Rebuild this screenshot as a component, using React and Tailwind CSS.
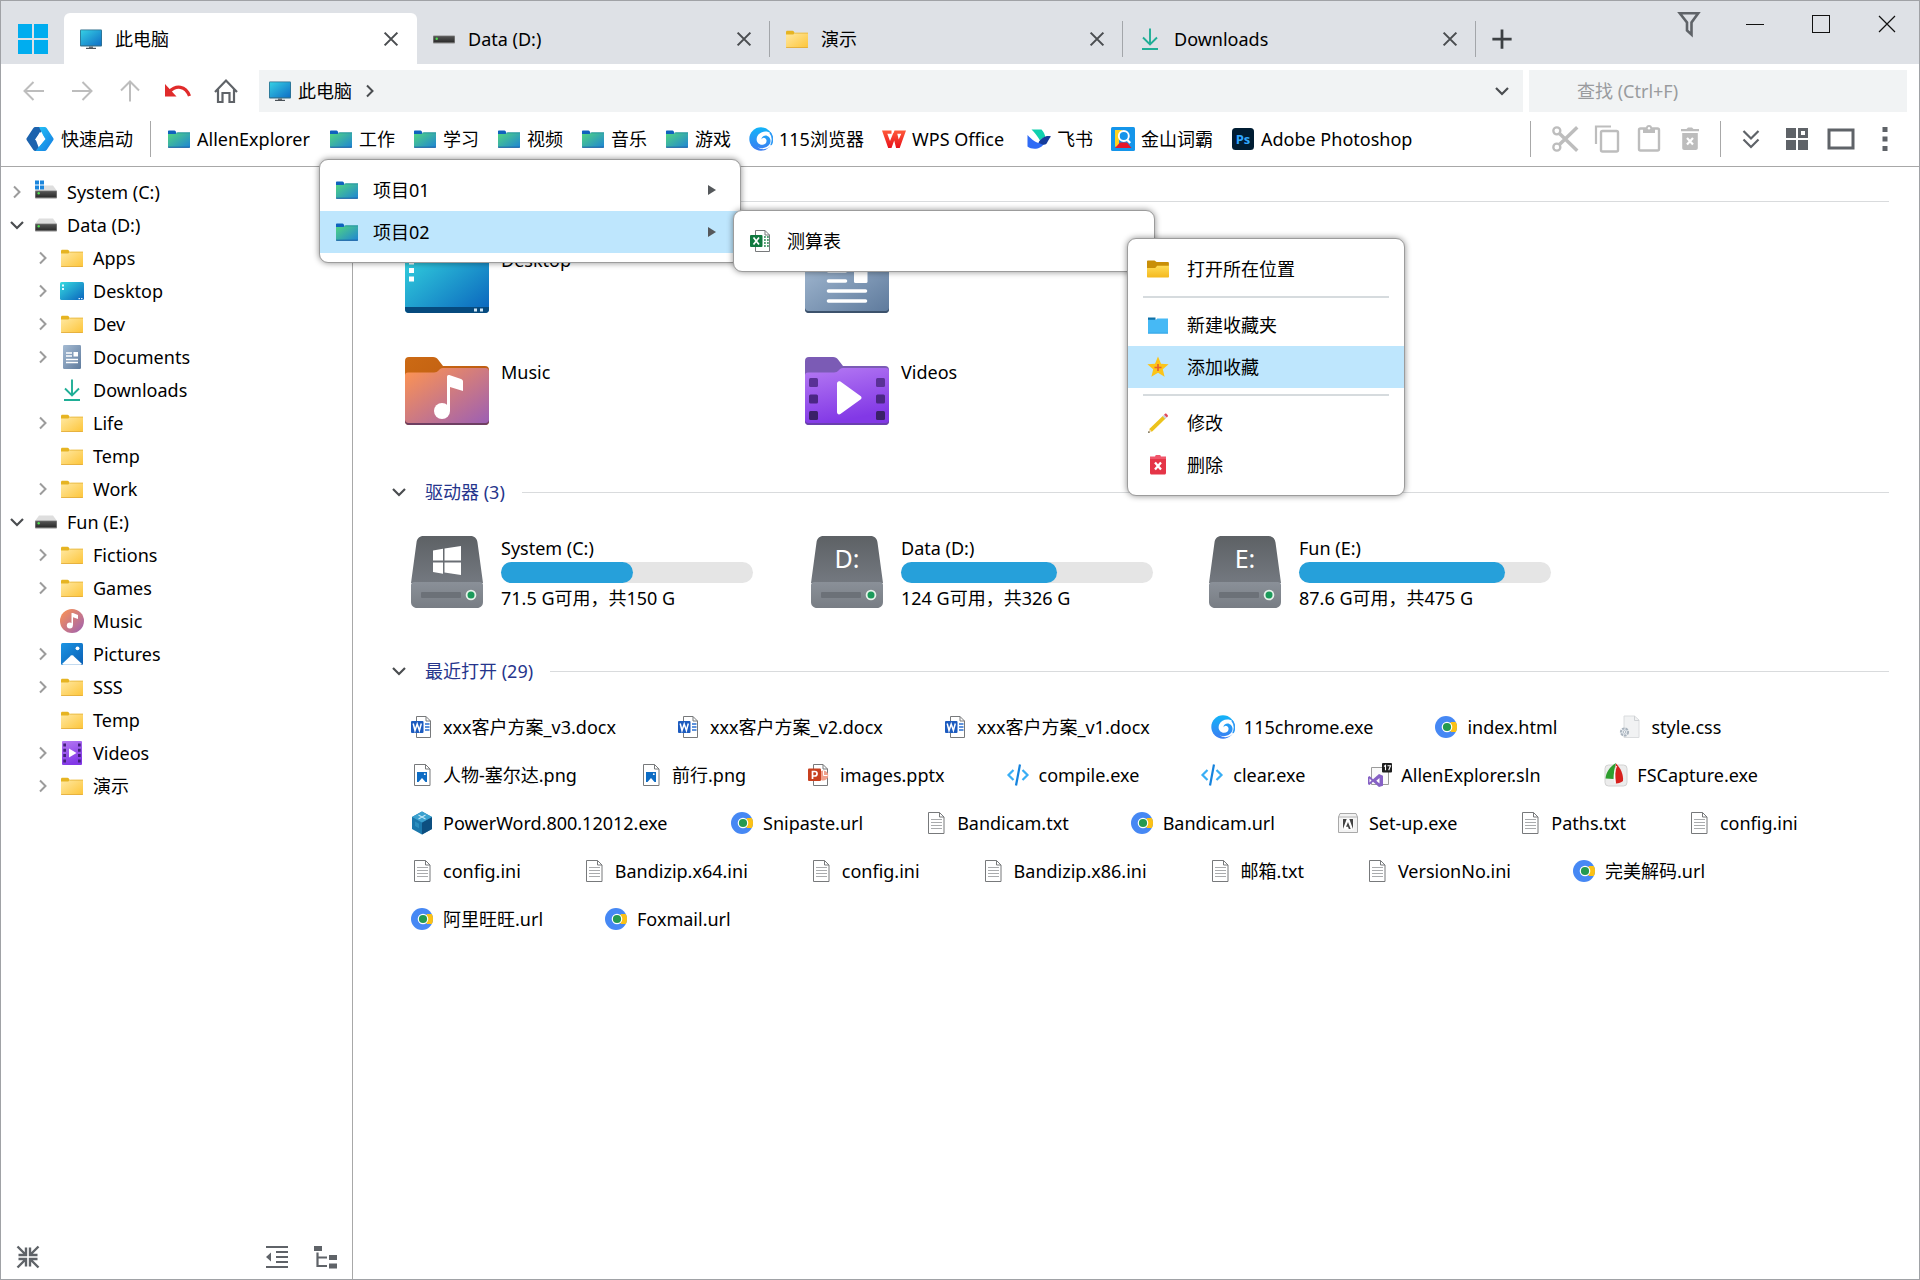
import React from "react";

/* ---------- small icons (drawn on a 24px grid) ---------- */

function Svg({ size = 24, box = "0 0 24 24", h, children }) {
  return (
    <svg width={size} height={h || size} viewBox={box} className="block shrink-0" fill="none" aria-hidden="true">
      {children}
    </svg>
  );
}

function Defs() {
  const g = (id, a, b, x2 = 1, y2 = 1) => (
    <linearGradient id={id} x1="0" y1="0" x2={x2} y2={y2}>
      <stop offset="0" stopColor={a} />
      <stop offset="1" stopColor={b} />
    </linearGradient>
  );
  return (
    <svg width="0" height="0" className="absolute" aria-hidden="true">
      <defs>
        {g("gYellow", "#ffe9a4", "#fdc539")}
        {g("gTeal", "#52d77f", "#1f84d4")}
        {g("gScreen", "#35cfe4", "#0f6fc6")}
        {g("gDesk", "#36dbe0", "#0a63bd")}
        {g("gDoc", "#a5bbd3", "#5f7b9d")}
        {g("gMusic", "#ff9550", "#9c5fb4")}
        {g("gMusicTab", "#cc6a14", "#b4540f")}
        {g("gVideo", "#b57af3", "#8238e6", 0.3, 1)}
        {g("gPic", "#1b95e4", "#0b5fb4")}
        {g("gDriveTop", "#5d6165", "#747980", 0, 1)}
        {g("gDriveLow", "#8a9098", "#787d84", 0, 1)}
        {g("gSwirl", "#12b4f8", "#3d7df2", 0, 1)}
        {g("gQuick", "#25c6f8", "#1479e0")}
        {g("gWps", "#ff5a3a", "#e8101a", 0, 1)}
        {g("gBar", "#555", "#2b2b2b", 0, 1)}
        {g("gOpen", "#ffdc55", "#f4b81e", 0, 1)}
      </defs>
    </svg>
  );
}

const FolderIcon = () => (
  <Svg>
    <path d="M1 5.2c0-.8.5-1.4 1.3-1.4h5.2c.6 0 1 .2 1.3.7l1 1.5v2.5H1z" fill="#e6b422" />
    <path d="M1 7.5h7.3l2-1.7H23V20a.8.8 0 0 1-.8.8H1.8A.8.8 0 0 1 1 20z" fill="url(#gYellow)" />
    <path d="M1 20.2h22v.2c0 .4-.4.7-.8.7H1.8c-.4 0-.8-.3-.8-.7z" fill="#e0a52c" />
    <path d="M10.300 5.800H23v.8H9.500z" fill="#e3b43a" />
  </Svg>
);

const TealFolderIcon = () => (
  <Svg>
    <path d="M1 4.500c0-.6.4-1 1-1h5.500c.5 0 .8.2 1 .6l1 1.900V8H1z" fill="#0f62bd" />
    <path d="M1 7h7.500l2-1.600H23V20a.6.600 0 0 1-.6.6H1.600A.6.600 0 0 1 1 20z" fill="url(#gTeal)" />
    <path d="M10.500 5.400H23v.9H9.500z" fill="#1a8a9c" />
    <path d="M1 19.700h22v.3c0 .4-.3.700-.6.700H1.600c-.3 0-.6-.3-.6-.7z" fill="#125aa0" />
  </Svg>
);

const BlueFolderIcon = () => (
  <Svg>
    <path d="M2 4.500h7.500v3H2z" fill="#1172a8" />
    <path d="M2 6.800h8l1.200-1.300H22V20.500H2z" fill="#46b9f5" />
    <path d="M2 19.700h20v.8H2z" fill="#2d9fe0" />
  </Svg>
);

const OpenFolderIcon = () => (
  <Svg>
    <path d="M1 4.300c0-.4.4-.8.800-.8H8.500L10.600 5H22c.5 0 .9.4.9.900V13H1z" fill="#c98f08" />
    <path d="M1 11h8.200l2-2.300H23V19.600c0 .6-.4 1-1 1H2c-.6 0-1-.4-1-1z" fill="url(#gOpen)" />
  </Svg>
);

const MonitorIcon = () => (
  <Svg>
    <rect x="1" y="2.500" width="22" height="17" rx="1" fill="#2f6f8c" />
    <rect x="1.800" y="3.300" width="20.400" height="15" fill="url(#gScreen)" />
    <path d="M10 19.500h4v1.400h-4z" fill="#5d6268" />
    <path d="M7 20.800h10V22H7z" fill="#4b5258" />
  </Svg>
);

const DriveIcon = ({ win, flat }) => (
  <Svg>
    {!flat && <path d="M5 5.500h14l4 5.500H1z" fill="#dedede" />}
    <rect x="1" y={flat ? 8.500 : 10.500} width="22" height="8" rx=".8" fill="#8b8b8b" />
    <rect x="1.600" y={flat ? 9.200 : 11.200} width="20.800" height="6.200" fill="url(#gBar)" />
    <circle cx="4.700" cy={flat ? 11.700 : 13.300} r="1.200" fill="#4fe04f" />
    {win && (
      <g>
        <rect x="0" y="0" width="10" height="9.500" fill="#fff" />
        <path d="M1 .5h4v4H1zM6 .5h4v4H6zM1 5.500h4v4H1zM6 5.500h4v4H6z" fill="#1c86dc" />
      </g>
    )}
  </Svg>
);

const DownloadIcon = () => (
  <Svg>
    <path d="M12 1.500V17M5 10.500l7 7 7-7M4 22h16" stroke="#1fae96" strokeWidth="1.900" />
  </Svg>
);

const DesktopIcon = () => (
  <Svg>
    <rect x="0" y="3" width="24" height="18" rx="1.600" fill="url(#gDesk)" />
    <path d="M2 5.500h2v2H2zM2 9h2v2H2z" fill="#e8fbff" />
    <path d="M18.500 19h1.500v1.200h-1.500zM21 19h1.500v1.200H21z" fill="#d5eeff" />
  </Svg>
);

const DocumentsIcon = () => (
  <Svg>
    <rect x="3" y="0" width="18" height="24" rx="1.200" fill="url(#gDoc)" />
    <path d="M6 8h6M6 11h6M6 14.500h12M6 17.500h12" stroke="#fff" strokeWidth="1.300" />
    <rect x="13.500" y="7" width="4.500" height="4.500" fill="#fff" />
  </Svg>
);

const MusicIcon = () => (
  <Svg>
    <circle cx="12" cy="12" r="12" fill="url(#gMusic)" />
    <circle cx="9.800" cy="16.500" r="3" fill="#fff" />
    <path d="M11.500 4h1.500l5 2v4l-5-1.700v8h-1.500z" fill="#fff" />
  </Svg>
);

const PicturesIcon = () => (
  <Svg>
    <rect x="1" y="1" width="22" height="22" rx="1.500" fill="url(#gPic)" />
    <path d="M2 22l9-8.500c.6-.5 1.400-.5 2 0l9 8.500c-.3.600-.8.800-1.500.800h-17c-.7 0-1.200-.2-1.500-.8z" fill="#fff" />
    <circle cx="17.500" cy="6.300" r="1.900" fill="#fff" />
  </Svg>
);

const VideosIcon = () => (
  <Svg>
    <rect x="2" y="0" width="20" height="24" rx="1" fill="url(#gVideo)" />
    <path d="M3.300 2.500h2.700v3H3.300zM3.300 7.800h2.700v3H3.300zM3.300 13.100h2.700v3H3.300zM3.300 18.500h2.700v3H3.300zM18 2.500h2.700v3H18zM18 7.800h2.700v3H18zM18 13.100h2.700v3H18zM18 18.500h2.700v3H18z" fill="#42207c" />
    <path d="M9 7.500l7.500 4.500L9 16.500z" fill="#fff" />
  </Svg>
);

/* ---------- application icons ---------- */

const WinLogo = () => (
  <Svg size={30} box="0 0 30 30">
    <path d="M0 0h14v14H0zM16 0h14v14H16zM0 16h14v14H0zM16 16h14v14H16z" fill="#00adef" />
  </Svg>
);

const QuickIcon = () => (
  <Svg size={28} h={24} box="0 0 28 24">
    <path d="M10 0h9L9.500 12 14 24h-4.500c-1 0-1.800-.4-2.300-1.200L.8 13.200a2 2 0 0 1 0-2.300L7.200 1.200C7.800.4 8.500 0 10 0z" fill="#1c63ae" />
    <path d="M13 0h5.500c1 0 1.800.4 2.300 1.200l6.400 9.700c.5.700.5 1.600 0 2.300l-6.400 9.600c-.5.800-1.300 1.200-2.300 1.200H9.500L19 12z" fill="url(#gQuick)" />
    <path d="M14 5l5.500 7L13 19.500l.5-5.500-4.500-1z" fill="#fff" />
  </Svg>
);

const SwirlIcon = () => (
  <Svg>
    <circle cx="12" cy="12" r="11.700" fill="url(#gSwirl)" />
    <path d="M22 6.500C17.500 3 10.500 4.500 8.300 9.300c-2 4.400.7 8.500 4.700 8.500 3 0 4.900-2.200 4.500-4.500-.3-1.700-1.700-2.600-3.300-2.400-1 .1-1.700.8-1.900 1.500.3-2.700 3.200-4.600 6-3.500 3.200 1.300 4.200 5.100 2.400 8.200-2.400 4-8 5.200-12.200 3.100 4.600 3.400 11.600 2.200 14-2.700 1.600-3.500.8-8.500-.5-11z" fill="#fff" />
    <path d="M21 5.500c2.800 3.700 3.200 8.300 1 12.500" stroke="#2f9af5" strokeWidth="1.600" />
  </Svg>
);

const WpsIcon = () => (
  <Svg>
    <path d="M0 3.500h9.500v3.200H5.300L8 14l3.300-8h3.800l1.600 6.500 2.600-5.800h-8L12.500 3.500H24L17.700 21h-3.600l-1.900-7.500L9.500 21H6.200z" fill="url(#gWps)" />
  </Svg>
);

const FeishuIcon = () => (
  <Svg>
    <path d="M4.500 2.500h10c2 2 3.400 4.800 3.800 7.500-2 .6-3.800 1.800-5.300 3.600C10.500 9.500 8 5.800 4.500 2.500z" fill="#10d0ae" />
    <path d="M.5 8v11.500C5 23 14 23 18 15.500c-6 2.500-12-1.500-17.500-7.500z" fill="#2f6bf5" />
    <path d="M11.500 15.500C14.500 11 19 8 24 9.500c-1.800 2-2.800 4.500-4.300 6.900-2 2-5.200 1.600-8.200-.9z" fill="#153c9c" />
  </Svg>
);

const DictIcon = () => (
  <Svg>
    <rect width="24" height="24" rx="1.500" fill="#1495ea" />
    <path d="M4 3h7.500L8 13v8l-4-1.500z" fill="#ffd21e" />
    <path d="M4 21l5-5.500h7L20.500 21z" fill="#e8162b" />
    <circle cx="12.800" cy="9" r="5" fill="#1495ea" stroke="#fff" strokeWidth="1.900" />
    <path d="M16 12.500l3.200 3.500" stroke="#fff" strokeWidth="2.200" />
  </Svg>
);

const PsIcon = () => (
  <Svg>
    <rect x="1" y="1" width="22" height="22" rx="3.500" fill="#001d33" />
    <text x="12" y="16.500" textAnchor="middle" fontSize="13" fontWeight="700" fontFamily="'Open Sans', sans-serif" fill="#31a8ff">Ps</text>
  </Svg>
);

const Page = ({ children, x = 4 }) => (
  <>
    <path d={x === 4 ? "M4.500 1.500h11l4.500 4.500V22.500H4.500z" : "M6.500 1.500h9.500l4.500 4.500V22.500H6.500z"} fill="#fff" stroke="#77797b" />
    <path d={x === 4 ? "M15.500 1.500V6H20" : "M16 1.500V6h4.500"} stroke="#77797b" />
    {children}
  </>
);

const WordIcon = () => (
  <Svg>
    <Page x={6}><path d="M15 9h4.500M15 12h4.500M15 15h4.500" stroke="#2a6fd0" strokeWidth="1.400" /></Page>
    <rect x="1" y="6" width="12.500" height="12" rx="1" fill="#1c5bbf" />
    <path d="M3.200 8.500l1.800 7 2.200-6.500 2.200 6.500 1.900-7" stroke="#fff" strokeWidth="1.500" />
  </Svg>
);

const PptIcon = () => (
  <Svg>
    <Page x={6}><path d="M14 8a5 5 0 1 1 0 9z" fill="#f0a08c" /><path d="M16.500 7.500v5h4" stroke="#fff" /></Page>
    <rect x="1" y="5.500" width="13" height="12.500" rx="1" fill="#c8401f" />
    <path d="M5.500 16V8.500h2.300a2.200 2.200 0 0 1 0 4.500H5.500" stroke="#fff" strokeWidth="1.700" />
  </Svg>
);

const ExcelIcon = () => (
  <Svg>
    <Page x={6}><path d="M15 8h1.800M18 8h1.800M15 11h1.800M18 11h1.800M15 14h1.800M18 14h1.800M15 17h1.800M18 17h1.800" stroke="#1f8048" strokeWidth="1.600" /></Page>
    <rect x="1" y="6" width="12.500" height="12" rx="1" fill="#10793f" />
    <path d="M4.500 8.500l5.500 7M10 8.500l-5.500 7" stroke="#fff" strokeWidth="1.700" />
  </Svg>
);

const PngIcon = () => (
  <Svg>
    <Page>
      <rect x="7" y="9" width="10" height="10" fill="#0d6cc4" />
      <path d="M8.500 19l3.500-4 3.500 4z" fill="#fff" />
      <circle cx="14.800" cy="11.200" r=".9" fill="#fff" />
    </Page>
  </Svg>
);

const TextIcon = () => (
  <Svg>
    <Page><path d="M7 8.500h11M7 11.500h11M7 14.500h11M7 17.500h11" stroke="#a9abad" /></Page>
  </Svg>
);

const CodeIcon = () => (
  <Svg>
    <path d="M7.500 7l-5 5 5 5M16.500 7l5 5-5 5" stroke="#38aef5" strokeWidth="2.200" />
    <path d="M14 1.500L10 22.500" stroke="#1583dd" strokeWidth="2.200" />
  </Svg>
);

const ChromiumIcon = () => (
  <Svg>
    <circle cx="12" cy="12" r="11" fill="#4688f4" />
    <path d="M15 9.500l2-2.500h4.800a11 11 0 0 1 0 10H17l-2-2.500z" fill="#fbc116" />
    <circle cx="13" cy="12" r="5.300" fill="#fff" />
    <circle cx="13" cy="12" r="4.100" fill="#249a50" />
  </Svg>
);

const CssIcon = () => (
  <Svg>
    <path d="M6 1h10.500L21 5v17.500H6z" fill="#f1f2f3" stroke="#dadcde" />
    <path d="M16.500 1v4.500H21" stroke="#cfd2d5" />
    <circle cx="6.500" cy="17" r="3.600" fill="#e8edf2" stroke="#aab4be" strokeWidth="2" strokeDasharray="2.600 .9" />
    <circle cx="6.500" cy="17" r="1.300" fill="#fff" stroke="#a0abb5" strokeWidth=".8" />
  </Svg>
);

const SlnIcon = () => (
  <Svg>
    <path d="M3.500 4.500h17v17h-17z" fill="#fafafa" stroke="#9b9b9b" />
    <rect x="14" y="0" width="10" height="9.500" rx="1" fill="#1e1e1e" />
    <path d="M16 3.500l1.500-1.200v5M19.500 2.700h3l-1.800 4.600" stroke="#fff" strokeWidth="1.100" />
    <path d="M0 14l1.500-1 3.500 3.200L11 11l4 1.800v10L11 24l-6-5.200L1.500 22 0 21.200z" fill="#8661c5" />
    <path d="M1.500 15.500v4l2-2zM11.500 15v5.500l-3.200-2.800z" fill="#fff" />
  </Svg>
);

const CaptureIcon = () => (
  <Svg>
    <rect x="1" y="2" width="22" height="21" rx="3.500" fill="#ececec" stroke="#d2d2d2" />
    <path d="M12 0C5.500 4 2 9.500 1.500 15.500l8 .5C9.500 11 10.500 5.500 12 0z" fill="#2f9e2f" />
    <path d="M12 .5c-1.200 6-.8 13.500 0 20 3-.3 5-1 7-2.500C19.500 11.500 17 5.500 12 .5z" fill="#d7201d" />
    <path d="M12.500 3c-2 5-2.500 10-1.500 17" stroke="#fff" />
  </Svg>
);

const CubeIcon = () => (
  <Svg>
    <path d="M12 .5l10 5.500v12l-10 5.500L2 18V6z" fill="#1b78ac" />
    <path d="M12 11.500l10-5.500v12l-10 5.500z" fill="#0d4f80" />
    <path d="M12 .5l10 5.500-10 5.500L2 6z" fill="#3ba1cf" />
    <path d="M8.500 4l7 4M15.500 4l-7 4" stroke="#bfe6f7" strokeWidth="1.100" />
    <path d="M5 10.500l4 2.200v4.500l-4-2.200z" fill="#2c8fbf" />
  </Svg>
);

const SetupIcon = () => (
  <Svg>
    <path d="M4 2.500h16l1.500 3.500v15.500h-19V6z" fill="#f3f3f3" stroke="#a9a9a9" />
    <path d="M2.500 6h19" stroke="#b5b5b5" />
    <rect x="6.500" y="7.500" width="11" height="11" fill="#fff" />
    <path d="M7 18V8h3.700zM17 18V8h-3.700zM12 11l2.700 7h-1.900l-.8-2.300H10z" fill="#444" />
  </Svg>
);

const StarIcon = () => (
  <Svg>
    <path d="M12 1.500l3 7.200 7.600.6-5.800 5 1.800 7.500L12 17.800l-6.600 4 1.800-7.500-5.800-5 7.600-.6z" fill="#fcc419" />
    <path d="M12 9v7M8.500 12.500h7" stroke="#e8622c" strokeWidth="1.700" />
  </Svg>
);

const PencilIcon = () => (
  <Svg>
    <path d="M2.300 21.700l1.500-4.200L17 4.800l2.600 2.600L6.500 20.300z" fill="#ecc31c" />
    <path d="M2.300 21.700l1.200-3.500 2.200 2.200z" fill="#f6dfc0" />
    <path d="M2 22l.8-2 1.200 1.200z" fill="#444" />
    <path d="M16.500 5.200l1.400-1.400 2.700 2.700-1.400 1.400z" fill="#c9d3dc" />
    <path d="M18 3.700l.8-.8c.6-.6 1.300-.6 1.800 0l1 1c.5.5.5 1.200 0 1.800l-.8.800z" fill="#e24a5c" />
  </Svg>
);

const TrashRedIcon = () => (
  <Svg>
    <path d="M4 3.500h5l.8-1.500h4.400l.8 1.500h5V6H4z" fill="#f0566b" />
    <path d="M4 6h16v14c0 .9-.6 1.500-1.500 1.500h-13C4.600 21.500 4 20.900 4 20z" fill="#e53547" />
    <path d="M9 9.500l6 7M15 9.500l-6 7" stroke="#fff" strokeWidth="2.300" />
  </Svg>
);

/* ---------- toolbar glyphs ---------- */

const Stroke = ({ d, c = "#5f6368", w = 2, size = 24 }) => (
  <Svg size={size}><path d={d} stroke={c} strokeWidth={w} /></Svg>
);
const ChevronRight = ({ c = "#9c9c9c" }) => <Stroke d="M9 6.500l5.500 5.500L9 17.500" c={c} />;
const ChevronDown = ({ c = "#4a4d50" }) => <Stroke d="M6 9l6 6 6-6" c={c} w={2.200} />;

const UndoIcon = () => (
  <Svg size={26} box="0 0 26 26">
    <path d="M0 6v12.500h11.500z" fill="#e02b2b" />
    <path d="M4.500 13.500C11 7 20.500 7.500 24.500 18" stroke="#e02b2b" strokeWidth="3.200" />
  </Svg>
);
const HomeIcon = () => (
  <Svg size={26} box="0 0 26 26">
    <path d="M2 14L13 2.500 24 14M5 11.500v12.500h4.500V15h7v9H21V11.500" stroke="#5f6368" strokeWidth="2.200" />
  </Svg>
);
const FilterIcon = () => (
  <Svg size={24} h={28} box="0 0 24 28">
    <path d="M2.800 3.200h18.400L14.500 12.500v12l-4.500-4v-8z" stroke="#5f6368" strokeWidth="2.600" />
  </Svg>
);
const ScissorsIcon = () => (
  <Svg size={28}>
    <g stroke="#bdbdbd" strokeWidth="2">
      <circle cx="5" cy="5" r="3" /><circle cx="5" cy="19" r="3" />
      <path d="M7.500 7.500L22.500 22M7.500 16.500L22.500 2" strokeWidth="3" />
    </g>
  </Svg>
);
const CopyIcon = () => (
  <Svg size={28} box="0 0 28 28">
    <path d="M3 19V1.500h15" stroke="#bdbdbd" strokeWidth="2.200" />
    <rect x="8" y="6" width="17" height="20.500" rx="1.500" stroke="#bdbdbd" strokeWidth="2.400" />
  </Svg>
);
const PasteIcon = () => (
  <Svg size={28} box="0 0 28 28">
    <rect x="4" y="3.500" width="20" height="22" rx="1.500" stroke="#bdbdbd" strokeWidth="2.400" />
    <path d="M8 3h3a3 3 0 0 1 6 0h3v5H8z" fill="#bdbdbd" />
    <circle cx="14" cy="3.200" r="1.200" fill="#fff" />
  </Svg>
);
const TrashIcon = () => (
  <Svg size={24}>
    <path d="M3 2h5.500L10 .5h4L15.500 2H21v2.200H3zM4.200 6h15.600v15c0 1-.8 2-2 2H6.200c-1.200 0-2-1-2-2z" fill="#bdbdbd" />
    <path d="M9 11l6 6.500M15 11l-6 6.500" stroke="#fff" strokeWidth="2.200" />
  </Svg>
);
const GridIcon = () => (
  <Svg>
    <path d="M1 1h10v10H1zM1 13h10v10H1zM13 13h10v10H13z" fill="#5f6368" />
    <rect x="14.500" y="2.500" width="7" height="7" stroke="#5f6368" strokeWidth="3" />
  </Svg>
);
const CollapseIcon = () => (
  <Svg>
    <path d="M1.500 1.500l8 8M22.500 1.500l-8 8M1.500 22.500l8-8M22.500 22.500l-8-8M10 2.500v7.500H2.500M14 2.500v7.500h7.500M10 21.500v-7.500H2.500M14 21.500v-7.500h7.500" stroke="#5f6368" strokeWidth="2.400" />
  </Svg>
);
const OutdentIcon = () => (
  <Svg>
    <path d="M1 2h22M11 7h12M11 12h12M11 17h12M1 22h22" stroke="#5f6368" strokeWidth="2.200" />
    <path d="M6 7.500v9L1 12z" fill="#5f6368" />
  </Svg>
);
const TreeIcon = () => (
  <Svg>
    <path d="M1 1h8v5H1zM16 10h8v5h-8zM16 18.500h8v5h-8z" fill="#5f6368" />
    <path d="M4.500 7.500v13.500H14M4.500 12.500H14" stroke="#5f6368" strokeWidth="2.200" />
  </Svg>
);

/* ---------- title bar ---------- */

const tabs = [
  { label: "此电脑", icon: <MonitorIcon />, active: true },
  { label: "Data (D:)", icon: <DriveIcon flat /> },
  { label: "演示", icon: <FolderIcon /> },
  { label: "Downloads", icon: <DownloadIcon /> },
];

function TitleBar() {
  const control = "flex w-6 justify-center pt-1";
  return (
    <header className="flex h-[63px] shrink-0 items-stretch bg-[#dee1e6]">
      <button aria-label="Start" className="flex w-[63px] items-center justify-center pt-3"><WinLogo /></button>
      <div className="flex pt-3">
        {tabs.map((t) => (
          <div key={t.label} className={t.active ? "flex w-[353px] items-center rounded-t-md bg-white pl-[15px]" : "flex w-[353px] items-center pl-[15px]"}>
            <button className="flex flex-1 items-center gap-3 text-left">{t.icon}{t.label}</button>
            <button aria-label={"Close " + t.label} className="mr-[16px]"><Stroke d="M3.500 3.500l17 17M20.500 3.500l-17 17" c="#4a4d50" w={2.800} size={18} /></button>
            <span className={t.active ? "h-9 w-px" : "h-9 w-px bg-[#a3a6aa]"} />
          </div>
        ))}
      </div>
      <button aria-label="New tab" className="ml-[15px] pt-3"><Stroke d="M12 1.500v21M1.500 12h21" c="#3c4043" w={3} size={22} /></button>
      <div className="ml-auto flex items-start gap-[42px] pt-[9px] pr-[20px]">
        <button aria-label="Filter"><FilterIcon /></button>
        <button aria-label="Minimize" className={control}><Svg size={20} box="0 0 20 20"><path d="M1 10.500h18" stroke="#111" /></Svg></button>
        <button aria-label="Maximize" className={control}><Svg size={20} box="0 0 20 20"><rect x="1.500" y="1.500" width="17" height="17" stroke="#111" /></Svg></button>
        <button aria-label="Close" className={control}><Svg size={20} box="0 0 20 20"><path d="M2 2l16 16M18 2L2 18" stroke="#111" strokeWidth="1.200" /></Svg></button>
      </div>
    </header>
  );
}

/* ---------- navigation ---------- */

function NavBar() {
  const grey = "#bdbdbd";
  const cell = "flex w-6 justify-center";
  return (
    <nav className="flex h-12 shrink-0 items-end pr-[12px] pl-[21px]">
      <div className="flex h-[42px] w-[237px] items-center gap-6">
        <button aria-label="Back" className={cell}><Stroke d="M22 12H3M11.500 3L2.500 12l9 9" c={grey} /></button>
        <button aria-label="Forward" className={cell}><Stroke d="M2 12h19M12.500 3l9 9-9 9" c={grey} /></button>
        <button aria-label="Up" className={cell}><Stroke d="M12 22.500V3M3 11.500L12 2.500l9 9" c={grey} /></button>
        <button aria-label="Undo" className={cell}><UndoIcon /></button>
        <button aria-label="Home" className={cell}><HomeIcon /></button>
      </div>
      <div className="flex h-[42px] flex-1 items-center bg-[#f1f3f4] pr-[9px] pl-[9px]">
        <MonitorIcon />
        <button className="ml-[6px]">此电脑</button>
        <span className="ml-[6px]"><ChevronRight c="#4a4d50" /></span>
        <button aria-label="History" className="ml-auto"><ChevronDown /></button>
      </div>
      <input aria-label="Search" placeholder="查找 (Ctrl+F)" className="ml-[6px] h-[42px] w-[378px] bg-[#f1f3f4] pl-[48px] outline-none placeholder:text-[#999b9e]" />
    </nav>
  );
}

const bookmarks = [
  ["AllenExplorer", <TealFolderIcon />, "w-[144px]"],
  ["工作", <TealFolderIcon />, "w-[66px]"],
  ["学习", <TealFolderIcon />, "w-[66px]"],
  ["视频", <TealFolderIcon />, "w-[66px]"],
  ["音乐", <TealFolderIcon />, "w-[66px]"],
  ["游戏", <TealFolderIcon />, "w-[66px]"],
  ["115浏览器", <SwirlIcon />, "w-[115px]"],
  ["WPS Office", <WpsIcon />, "w-[127px]"],
  ["飞书", <FeishuIcon />, "w-[66px]"],
  ["金山词霸", <DictIcon />, "w-[102px]"],
  ["Adobe Photoshop", <PsIcon />, "w-[186px]"],
];

function BookmarkBar() {
  return (
    <div className="flex h-[55px] shrink-0 items-center border-b border-[#a8a8a8] pr-[22px] pl-[25px]">
      <button className="flex items-center gap-[7px]"><QuickIcon />快速启动</button>
      <span className="mr-[16px] ml-[17px] h-9 w-px bg-[#a8a8a8]" />
      <div className="flex gap-[18px] whitespace-nowrap">
        {bookmarks.map(([name, icon, width]) => (
          <button key={name} className={"flex items-center gap-[6px] " + width}>{icon}{name}</button>
        ))}
      </div>
      <div className="ml-auto flex items-center">
        <span className="mr-[20px] h-9 w-px bg-[#a8a8a8]" />
        <div className="flex items-center gap-[14px]">
          <button aria-label="Cut"><ScissorsIcon /></button>
          <button aria-label="Copy"><CopyIcon /></button>
          <button aria-label="Paste"><PasteIcon /></button>
          <button aria-label="Delete" className="pl-[1px]"><TrashIcon /></button>
        </div>
        <span className="mr-[18px] ml-[18px] h-9 w-px bg-[#a8a8a8]" />
        <div className="flex items-center gap-[18px]">
          <button aria-label="More bookmarks" className="mr-1"><Stroke d="M4.500 4l7.500 7.500L19.500 4M4.500 12.500L12 20l7.500-7.500" w={2.200} /></button>
          <button aria-label="Layout"><GridIcon /></button>
          <button aria-label="Panel"><Svg size={28} h={22} box="0 0 28 22"><rect x="2" y="2" width="24" height="18" stroke="#5f6368" strokeWidth="3" /></Svg></button>
          <button aria-label="Menu"><Svg><path d="M9.500 0h5v5h-5zM9.500 9.500h5v5h-5zM9.500 19h5v5h-5z" fill="#5f6368" /></Svg></button>
        </div>
      </div>
    </div>
  );
}

/* ---------- sidebar ---------- */

const tree = [
  [0, "closed", <DriveIcon win />, "System (C:)"],
  [0, "open", <DriveIcon />, "Data (D:)"],
  [1, "closed", <FolderIcon />, "Apps"],
  [1, "closed", <DesktopIcon />, "Desktop"],
  [1, "closed", <FolderIcon />, "Dev"],
  [1, "closed", <DocumentsIcon />, "Documents"],
  [1, "", <DownloadIcon />, "Downloads"],
  [1, "closed", <FolderIcon />, "Life"],
  [1, "", <FolderIcon />, "Temp"],
  [1, "closed", <FolderIcon />, "Work"],
  [0, "open", <DriveIcon />, "Fun (E:)"],
  [1, "closed", <FolderIcon />, "Fictions"],
  [1, "closed", <FolderIcon />, "Games"],
  [1, "", <MusicIcon />, "Music"],
  [1, "closed", <PicturesIcon />, "Pictures"],
  [1, "closed", <FolderIcon />, "SSS"],
  [1, "", <FolderIcon />, "Temp"],
  [1, "closed", <VideosIcon />, "Videos"],
  [1, "closed", <FolderIcon />, "演示"],
];

function Sidebar() {
  return (
    <aside className="flex w-[352px] shrink-0 flex-col border-r border-[#a8a8a8] pt-2">
      <ul>
        {tree.map(([level, state, icon, name], i) => (
          <li key={i} className={level ? "flex h-[33px] items-center pl-[30px]" : "flex h-[33px] items-center pl-1"}>
            <span className="w-[29px]">
              {state && (
                <button aria-label={"Toggle " + name} className="block">
                  {state === "open" ? <ChevronDown /> : <ChevronRight />}
                </button>
              )}
            </span>
            <button className="flex items-center gap-[9px]">{icon}{name}</button>
          </li>
        ))}
      </ul>
      <div className="mt-auto flex items-center px-[15px] pb-[10px]">
        <button aria-label="Collapse all"><CollapseIcon /></button>
        <button aria-label="Hide sidebar" className="ml-auto"><OutdentIcon /></button>
        <button aria-label="Locate in tree" className="ml-[24px]"><TreeIcon /></button>
      </div>
    </aside>
  );
}

/* ---------- main pane ---------- */

function Heading({ children }) {
  return (
    <h2 className="flex h-6 items-center text-[#26358c]">
      <button aria-label="Toggle section" className="mr-[14px]"><ChevronDown /></button>
      {children}
      <span className="ml-[17px] h-px flex-1 bg-[#d9dbdd]" />
    </h2>
  );
}

const BigSvg = ({ children }) => <Svg size={84} h={68} box="0 0 84 68">{children}</Svg>;

const BigDesktop = () => (
  <BigSvg>
    <rect width="84" height="68" rx="4" fill="url(#gDesk)" />
    <path d="M0 62h84v2a4 4 0 0 1-4 4H4a4 4 0 0 1-4-4z" fill="#064a7e" />
    <path d="M4 23h5v5H4zM4 31.500h5v5H4zM4 14.500h5v5H4z" fill="#fff" />
    <path d="M69 63.500h3v3h-3zM75 63.500h3v3h-3z" fill="#cfe6f7" />
  </BigSvg>
);

const FolderShape = ({ tab, body, edge }) => (
  <>
    <path d="M0 4a4 4 0 0 1 4-4h24c2.500 0 4 1 5 2.500L38 9h42a4 4 0 0 1 4 4v51a4 4 0 0 1-4 4H4a4 4 0 0 1-4-4z" fill={tab} />
    <path d="M0 64v-1h84v1a4 4 0 0 1-4 4H4a4 4 0 0 1-4-4z" fill={edge} />
    <path d="M0 18.500a3 3 0 0 1 3-3h26c2 0 3.500-.8 4.500-2l1.500-1.500c.8-.7 1.800-1 3-1h42.500a3.500 3.500 0 0 1 3.500 3.500V62.500c0 2-1.500 3.500-3.500 3.500h-77C1.500 66 0 64.500 0 62.500z" fill={body} />
  </>
);

const BigDocuments = () => (
  <BigSvg>
    <FolderShape tab="#4c6582" body="url(#gDoc)" edge="#3c526c" />
    <path d="M23.500 26h17M23.500 36h17M23.500 46h37M23.500 56h37" stroke="#fff" strokeWidth="3.600" strokeLinecap="round" />
    <rect x="49" y="24" width="13.500" height="14" rx="1.500" fill="#fff" />
  </BigSvg>
);

const BigMusic = () => (
  <BigSvg>
    <FolderShape tab="url(#gMusicTab)" body="url(#gMusic)" edge="#6e3f62" />
    <ellipse cx="37" cy="54" rx="8" ry="8" fill="#fff" />
    <path d="M42 20c0-1.500 1-2.300 2.300-1.900L56 22c1.300.4 2 1.300 2 2.500V34l-13-4v24h-3z" fill="#fff" />
  </BigSvg>
);

const BigVideos = () => (
  <BigSvg>
    <FolderShape tab="#7b5bb5" body="url(#gVideo)" edge="#6a3fae" />
    <g fill="#5a3196">
      <rect x="4" y="21" width="9" height="9" rx="1.500" /><rect x="71" y="21" width="9" height="9" rx="1.500" />
      <rect x="4" y="37.500" width="9" height="9" rx="1.500" fill="#4b2784" /><rect x="71" y="37.500" width="9" height="9" rx="1.500" fill="#4b2784" />
      <rect x="4" y="54" width="9" height="9" rx="1.500" fill="#3a2168" /><rect x="71" y="54" width="9" height="9" rx="1.500" fill="#3a2168" />
    </g>
    <path d="M32 26.500c0-2 1.800-3 3.400-1.900L55.500 39c1.400 1 1.400 2.600 0 3.600L35.400 57c-1.600 1.100-3.400.1-3.400-1.900z" fill="#fff" />
  </BigSvg>
);

const BigDrive = ({ letter }) => (
  <Svg size={72} box="0 0 72 72">
    <path d="M5.500 6.500C6 2.500 8.500 0 12.500 0h47c4 0 6.500 2.500 7 6.500L72 47H0z" fill="url(#gDriveTop)" />
    <path d="M0 49c0-2 1.500-3 3.500-3h65c2 0 3.500 1 3.500 3v17c0 3.500-2.500 6-6 6H6c-3.500 0-6-2.500-6-6z" fill="url(#gDriveLow)" />
    <rect x="10" y="56" width="40" height="6" rx="1" fill="#6c7178" />
    <circle cx="60" cy="59" r="5.300" fill="#e6f2ea" />
    <circle cx="60" cy="59" r="3.500" fill="#1b9a5a" />
    {letter ? (
      <text x="36" y="32" textAnchor="middle" fontSize="25" fontFamily="'Noto Sans', sans-serif" fill="#fff">{letter}</text>
    ) : (
      <path d="M22 14.500l10-1.700V24.500H22zM33.500 12.500L50 10v14.500H33.500zM22 26.500h10v11.200l-10-1.700zM33.500 26.500H50V39l-16.500-2.500z" fill="#fff" />
    )}
  </Svg>
);

const folders = [
  ["Desktop", <BigDesktop />],
  ["Documents", <BigDocuments />],
  ["Music", <BigMusic />],
  ["Videos", <BigVideos />],
];

const drives = [
  ["System (C:)", "", 71.5, 150, 132],
  ["Data (D:)", "D:", 124, 326, 156],
  ["Fun (E:)", "E:", 87.6, 475, 206],
];

const recent = [
  [
    ["xxx客户方案_v3.docx", WordIcon], ["xxx客户方案_v2.docx", WordIcon], ["xxx客户方案_v1.docx", WordIcon],
    ["115chrome.exe", SwirlIcon], ["index.html", ChromiumIcon], ["style.css", CssIcon],
  ],
  [
    ["人物-塞尔达.png", PngIcon, "min-w-[168px]"], ["前行.png", PngIcon], ["images.pptx", PptIcon], ["compile.exe", CodeIcon],
    ["clear.exe", CodeIcon, "min-w-[107px]"], ["AllenExplorer.sln", SlnIcon, "min-w-[175px]"], ["FSCapture.exe", CaptureIcon],
  ],
  [
    ["PowerWord.800.12012.exe", CubeIcon, "min-w-[259px]"], ["Snipaste.url", ChromiumIcon], ["Bandicam.txt", TextIcon],
    ["Bandicam.url", ChromiumIcon], ["Set-up.exe", SetupIcon], ["Paths.txt", TextIcon], ["config.ini", TextIcon],
  ],
  [
    ["config.ini", TextIcon], ["Bandizip.x64.ini", TextIcon], ["config.ini", TextIcon], ["Bandizip.x86.ini", TextIcon],
    ["邮箱.txt", TextIcon], ["VersionNo.ini", TextIcon], ["完美解码.url", ChromiumIcon],
  ],
  [["阿里旺旺.url", ChromiumIcon], ["Foxmail.url", ChromiumIcon]],
];

function MainPane() {
  return (
    <main className="flex-1 pt-[22px] pr-[30px] pl-[34px]">
      <Heading>文件夹 (4)</Heading>
      <div className="mt-[32px] grid grid-cols-[400px_398px] gap-y-[44px] pl-[18px]">
        {folders.map(([name, icon]) => (
          <button key={name} className="flex items-start gap-3 text-left">
            {icon}
            <span className="pt-[3px]">{name}</span>
          </button>
        ))}
      </div>
      <div className="mt-[55px]"><Heading>驱动器 (3)</Heading></div>
      <div className="mt-8 grid grid-cols-[400px_398px_1fr] pl-[24px]">
        {drives.map(([name, letter, free, total, used]) => (
          <div key={name} className="flex items-start gap-[18px]">
            <BigDrive letter={letter} />
            <div>
              <div className="h-[26px] leading-6">{name}</div>
              <div className="h-[21px] w-[252px] rounded-full bg-[#e5e5e5]">
                <div className="h-full rounded-full bg-[#26a0da]" style={{ width: used }} />
              </div>
              <div className="mt-[3px] leading-6">{free} G可用，共{total} G</div>
            </div>
          </div>
        ))}
      </div>
      <div className="mt-[49px]"><Heading>最近打开 (29)</Heading></div>
      <div className="mt-8 flex flex-col gap-6 pl-[23px]">
        {recent.map((row, i) => (
          <div key={i} className="flex gap-[61px] whitespace-nowrap">
            {row.map(([name, Icon, width = ""], j) => (
              <button key={j} className={"flex h-6 items-center gap-[9px] " + width}><Icon />{name}</button>
            ))}
          </div>
        ))}
      </div>
    </main>
  );
}

/* ---------- menus ---------- */

const menuBox = "absolute rounded-[9px] border border-[#9c9c9c] bg-white py-[9px] shadow-[0_0_6px_rgba(0,0,0,0.45)]";

function MenuItem({ icon, label, arrow, active, wide }) {
  return (
    <button
      role="menuitem"
      className={
        (active ? "bg-[#bee6fd] " : "") +
        (wide ? "flex h-[42px] w-full items-center gap-[17px] pl-[18px]" : "flex h-[42px] w-full items-center gap-[14px] pl-[15px]")
      }
    >
      {icon}
      {label}
      {arrow && (
        <span className="mr-[23px] ml-auto"><Svg size={9} h={12} box="0 0 9 12"><path d="M0 1l8 5-8 5z" fill="#55585b" /></Svg></span>
      )}
    </button>
  );
}

const Separator = () => <div className="mx-[15px] my-[6px] h-[2px] bg-[#d6dbde]" />;

function Menus() {
  return (
    <>
      <div role="menu" className={menuBox + " top-[158px] left-[318px] w-[422px]"}>
        <MenuItem icon={<TealFolderIcon />} label="项目01" arrow />
        <MenuItem icon={<TealFolderIcon />} label="项目02" arrow active />
      </div>
      <div role="menu" className={menuBox + " top-[209px] left-[732px] w-[422px]"}>
        <MenuItem icon={<ExcelIcon />} label="测算表" />
      </div>
      <div role="menu" className={menuBox + " top-[237px] left-[1126px] w-[278px]"}>
        <MenuItem wide icon={<OpenFolderIcon />} label="打开所在位置" />
        <Separator />
        <MenuItem wide icon={<BlueFolderIcon />} label="新建收藏夹" />
        <MenuItem wide icon={<StarIcon />} label="添加收藏" active />
        <Separator />
        <MenuItem wide icon={<PencilIcon />} label="修改" />
        <MenuItem wide icon={<TrashRedIcon />} label="删除" />
      </div>
    </>
  );
}

export default function App() {
  return (
    <div className="relative flex min-h-screen w-full flex-col border border-[#a0a2a6] bg-white font-['Noto_Sans','Noto_Sans_CJK_SC',sans-serif] text-[18px] leading-6 text-black">
      <Defs />
      <TitleBar />
      <NavBar />
      <BookmarkBar />
      <div className="flex flex-1">
        <Sidebar />
        <MainPane />
      </div>
      <Menus />
    </div>
  );
}
